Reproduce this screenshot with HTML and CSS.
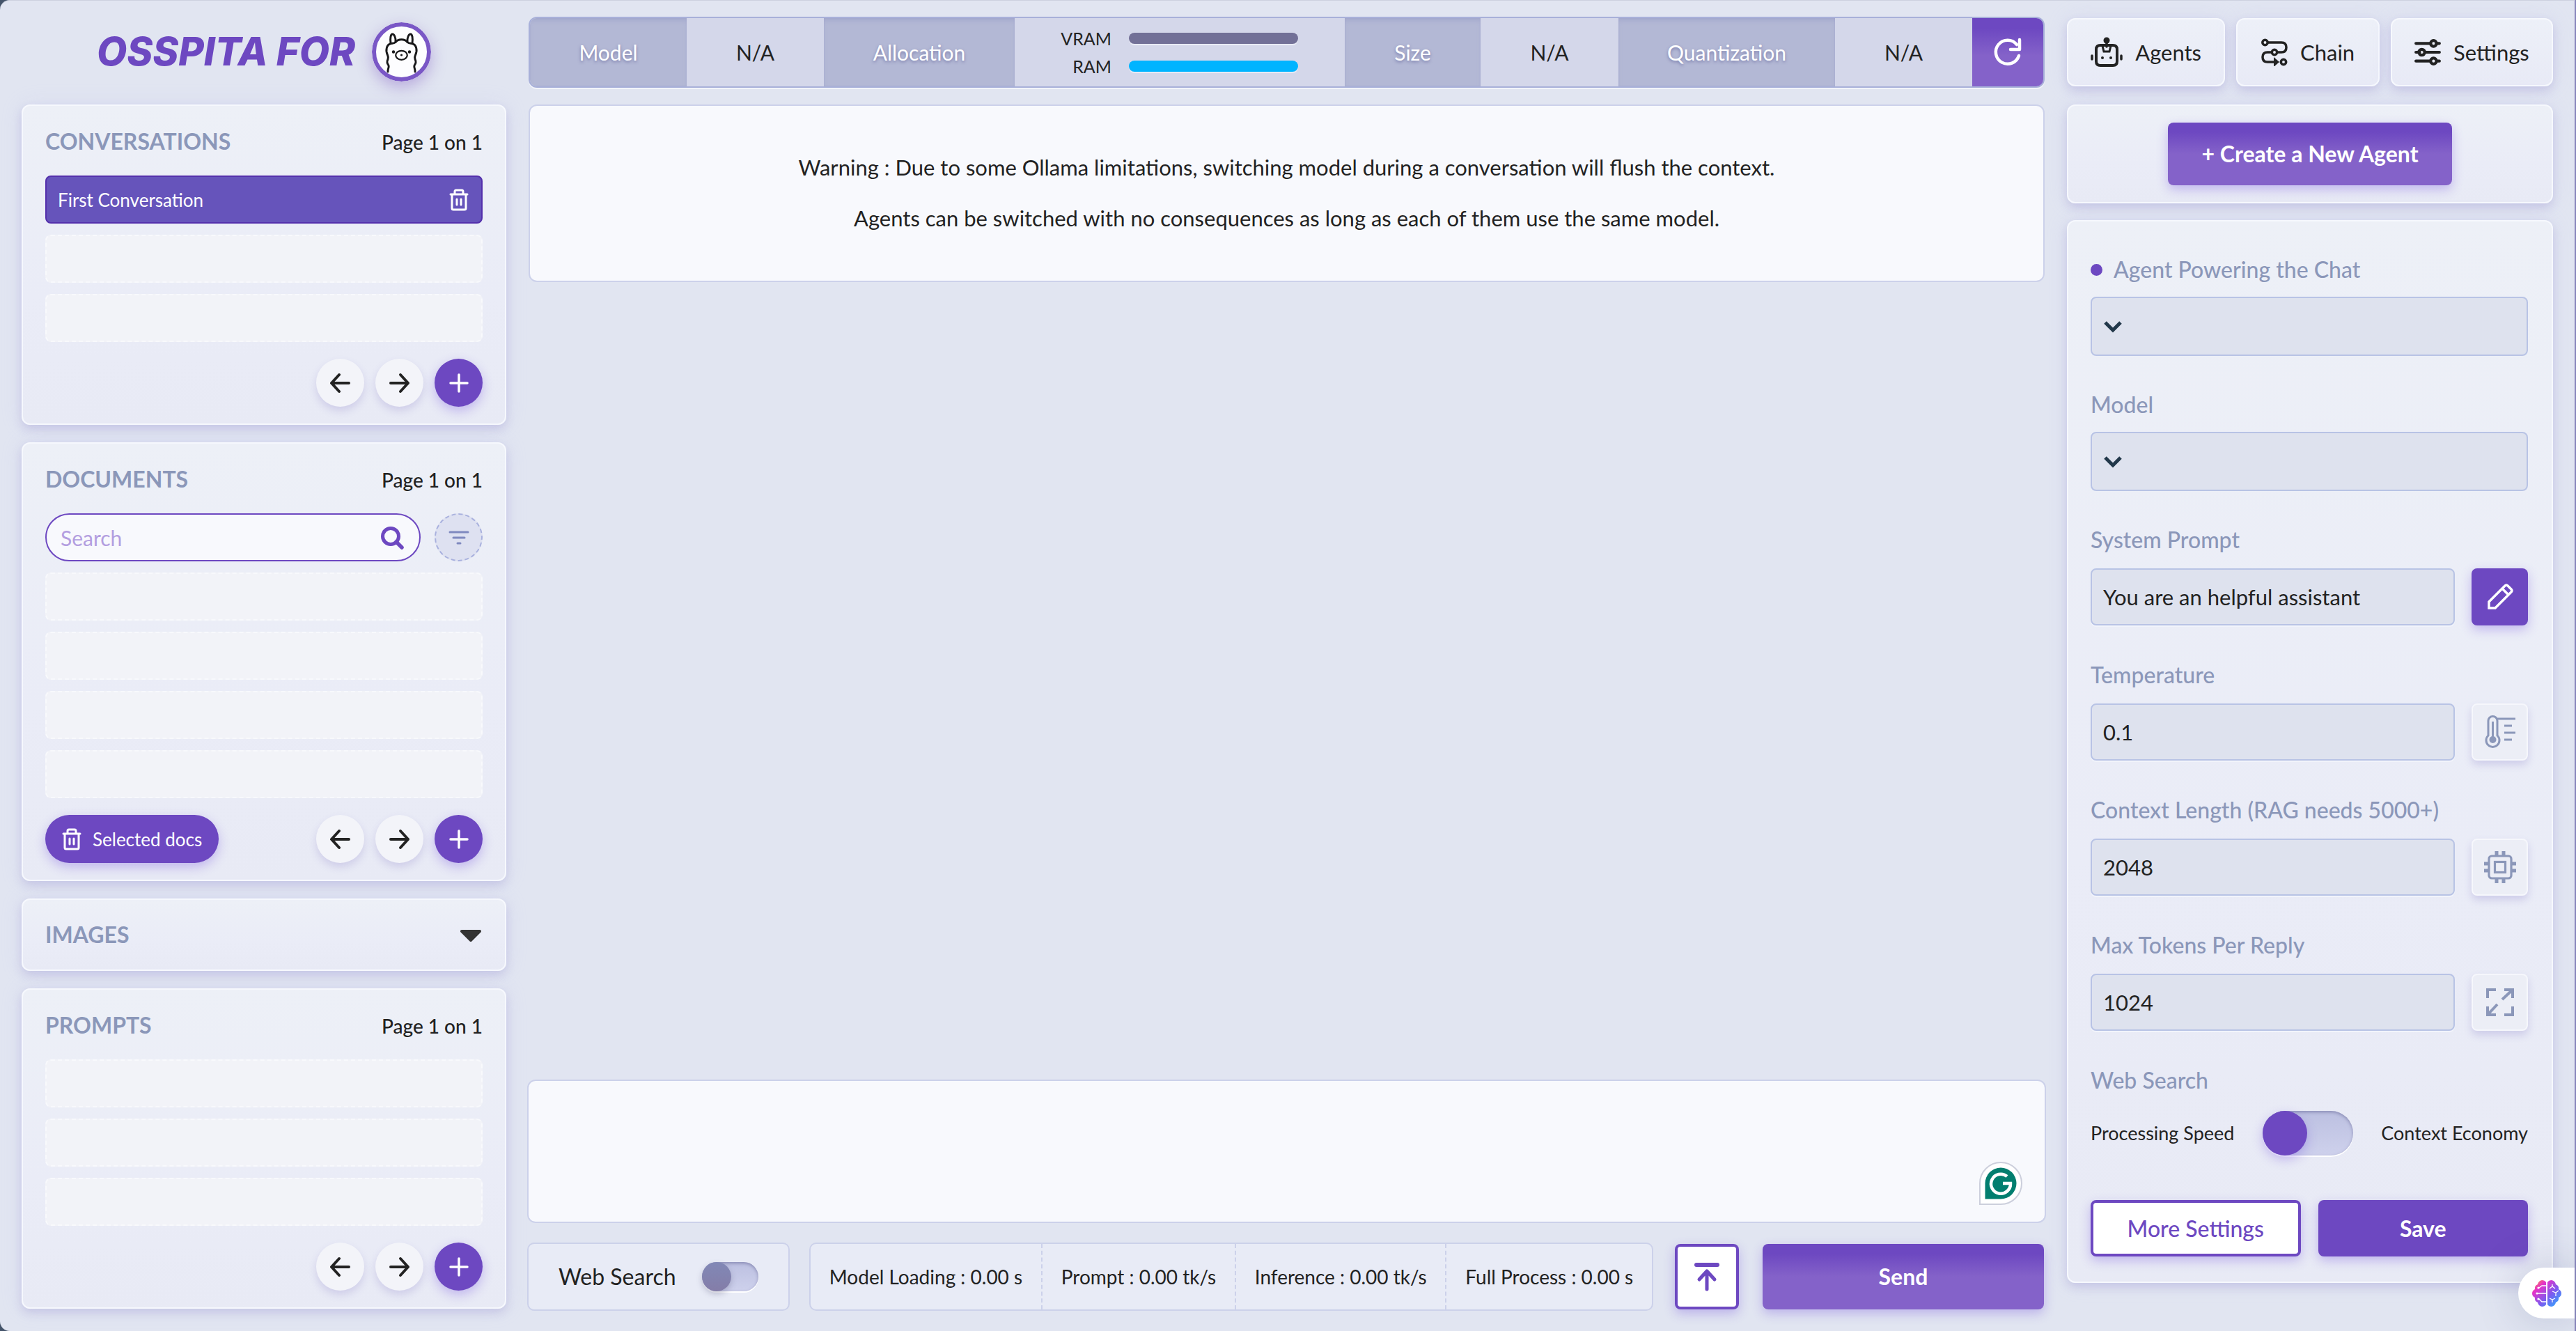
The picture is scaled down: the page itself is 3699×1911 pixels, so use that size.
FILE: index.html
```html
<!DOCTYPE html>
<html lang="en">
<head>
<meta charset="utf-8">
<title>OSSPITA FOR Ollama</title>
<link rel="stylesheet" href="styles.css">
</head>
<body>
<svg class="sprite" aria-hidden="true">
  <symbol id="i-left" viewBox="0 0 30 30"><path d="M27 15H3M13 3 2 15l11 12" fill="none" stroke="currentColor" stroke-width="4" stroke-linecap="round" stroke-linejoin="round"/></symbol>
  <symbol id="i-right" viewBox="0 0 30 30"><path d="M2 15h25M16 3l11 12-11 12" fill="none" stroke="currentColor" stroke-width="4" stroke-linecap="round" stroke-linejoin="round"/></symbol>
  <symbol id="i-plus" viewBox="0 0 30 30"><path d="M15 3v24M3 15h24" fill="none" stroke="currentColor" stroke-width="3.500" stroke-linecap="round"/></symbol>
  <symbol id="i-trash" viewBox="0 0 28 32"><path d="M2 8h24M8 7V4q0-2 2-2h8q2 0 2 2v3M4 9v19q0 2 2 2h16q2 0 2-2V9M11 15v8M17 15v8" fill="none" stroke="currentColor" stroke-width="3" stroke-linecap="round"/></symbol>
</svg>
<div class="page">
  <aside class="left">
    <header class="brand">
      <h1>OSSPITA FOR</h1>
      <svg class="logo" viewBox="0 0 85 85" role="img" aria-label="Ollama">
        <circle cx="42.500" cy="42.500" r="39.500" fill="#fdfdff" stroke="#7a57c6" stroke-width="6"/>
        <g fill="none" stroke="#18181a" stroke-width="2.900" stroke-linecap="round" stroke-linejoin="round">
          <g id="llama-side">
            <path d="M23 71c-.5-4 2-6 1-9-2-3-3-5-1-9 1-3 .5-4-.5-6-3-6-2-15 5-16.500 2-.5 5 0 6.500-2"/>
            <path d="M27 30c-1-7 0-13 2.500-13s5 5 4.500 11"/>
          </g>
          <use href="#llama-side" transform="matrix(-1 0 0 1 85 0)"/>
          <path d="M34 28.500c4-5 13-5 17 0"/>
          <ellipse cx="42.500" cy="47.300" rx="8.300" ry="6.500" stroke-width="2.200"/>
        </g>
        <g fill="#18181a"><circle cx="42.500" cy="47" r="1.600"/><circle cx="31" cy="42.500" r="2.200"/><circle cx="54" cy="42.500" r="2.200"/></g>
      </svg>
    </header>

    <section class="panel list-panel">
      <div class="panel-head"><h2>CONVERSATIONS</h2><span>Page 1 on 1</span></div>
      <ul class="rows">
        <li class="row active">First Conversation
          <button class="bare" aria-label="Delete conversation"><svg class="ic-trash"><use href="#i-trash"/></svg></button></li>
        <li class="row"></li>
        <li class="row"></li>
      </ul>
      <div class="pager">
        <button class="round" aria-label="Previous page"><svg class="ic"><use href="#i-left"/></svg></button>
        <button class="round" aria-label="Next page"><svg class="ic"><use href="#i-right"/></svg></button>
        <button class="round solid" aria-label="New conversation"><svg class="ic"><use href="#i-plus"/></svg></button>
      </div>
    </section>

    <section class="panel list-panel">
      <div class="panel-head"><h2>DOCUMENTS</h2><span>Page 1 on 1</span></div>
      <div class="search-row">
        <div class="search">
          <input type="text" placeholder="Search" aria-label="Search documents">
          <svg class="ic-search" viewBox="0 0 34 34"><circle cx="15" cy="15" r="11.500" fill="none" stroke="currentColor" stroke-width="5"/><path d="m23 23 8 8" stroke="currentColor" stroke-width="5.500" stroke-linecap="round"/></svg>
        </div>
        <button class="round filter" aria-label="Filter"><svg class="ic" viewBox="0 0 30 30"><path d="M2 7h26M7 15h16M13 23h4" stroke="currentColor" stroke-width="3" stroke-linecap="round"/></svg></button>
      </div>
      <ul class="rows">
        <li class="row"></li><li class="row"></li><li class="row"></li><li class="row"></li>
      </ul>
      <div class="pager">
        <button class="pill"><svg class="ic-trash"><use href="#i-trash"/></svg>Selected docs</button>
        <button class="round" aria-label="Previous page"><svg class="ic"><use href="#i-left"/></svg></button>
        <button class="round" aria-label="Next page"><svg class="ic"><use href="#i-right"/></svg></button>
        <button class="round solid" aria-label="Add document"><svg class="ic"><use href="#i-plus"/></svg></button>
      </div>
    </section>

    <section class="panel images">
      <h2>IMAGES</h2>
      <button class="bare" aria-label="Expand images"><svg class="ic" viewBox="0 0 30 30"><path d="M2 10h26L15 23z" fill="#333" stroke="#333" stroke-width="4" stroke-linejoin="round"/></svg></button>
    </section>

    <section class="panel list-panel">
      <div class="panel-head"><h2>PROMPTS</h2><span>Page 1 on 1</span></div>
      <ul class="rows">
        <li class="row"></li><li class="row"></li><li class="row"></li>
      </ul>
      <div class="pager">
        <button class="round" aria-label="Previous page"><svg class="ic"><use href="#i-left"/></svg></button>
        <button class="round" aria-label="Next page"><svg class="ic"><use href="#i-right"/></svg></button>
        <button class="round solid" aria-label="New prompt"><svg class="ic"><use href="#i-plus"/></svg></button>
      </div>
    </section>
  </aside>

  <main class="center">
    <div class="model-bar">
      <div class="cell key">Model</div><div class="cell">N/A</div>
      <div class="cell key">Allocation</div>
      <div class="cell memory">
        <div class="mem">VRAM <i class="meter"></i></div>
        <div class="mem">RAM <i class="meter full"></i></div>
      </div>
      <div class="cell key">Size</div><div class="cell">N/A</div>
      <div class="cell key">Quantization</div><div class="cell">N/A</div>
      <button class="refresh" aria-label="Refresh"><svg viewBox="0 0 42 42"><path d="M37 26A17 17 0 1 1 34 10" fill="none" stroke="#fff" stroke-width="4.500" stroke-linecap="round"/><path d="M38 3v14H25" fill="none" stroke="#fff" stroke-width="4.500" stroke-linecap="round" stroke-linejoin="round"/></svg></button>
    </div>

    <div class="chat">
      <div class="notice">
        <p>Warning : Due to some Ollama limitations, switching model during a conversation will flush the context.</p>
        <p>Agents can be switched with no consequences as long as each of them use the same model.</p>
      </div>
    </div>

    <div class="composer">
      <textarea aria-label="Message"></textarea>
      <svg class="grammar" viewBox="0 0 62 62" aria-hidden="true"><path d="M1 61V31A30 30 0 1 1 31 61z" fill="#fff" stroke="#cccfdc" stroke-width="2"/><path d="M8.500 53.500V31A22.500 22.500 0 1 1 31 53.500z" fill="#027e6f"/><path d="M40 21A14 14 0 1 0 45 31H34" fill="none" stroke="#fff" stroke-width="4.500"/></svg>
    </div>

    <div class="footer">
      <label class="box web">Web Search <input type="checkbox" class="toggle small"></label>
      <div class="box stats">
        <span>Model Loading : 0.00 s</span><span>Prompt : 0.00 tk/s</span><span>Inference : 0.00 tk/s</span><span>Full Process : 0.00 s</span>
      </div>
      <button class="btn outline top" aria-label="Scroll to top"><svg viewBox="0 0 36 42"><path d="M3 4h30" stroke="currentColor" stroke-width="6" stroke-linecap="round"/><path d="M18 39V14M7 25l11-12 11 12" fill="none" stroke="currentColor" stroke-width="5" stroke-linecap="round" stroke-linejoin="round"/></svg></button>
      <button class="btn gradient send">Send</button>
    </div>
  </main>

  <aside class="right">
    <nav class="tabs">
      <button class="tab agents"><svg viewBox="0 0 46 44"><path d="M8 18q0-6 6-6h18q6 0 6 6v17q0 6-6 6H14q-6 0-6-6z" fill="none" stroke="currentColor" stroke-width="4"/><circle cx="23" cy="5" r="4.500" fill="currentColor"/><path d="M23 6v8M2 27v5M44 27v5" stroke="currentColor" stroke-width="3.500" stroke-linecap="round"/><path d="M17 13l2 8h8l2-8" fill="none" stroke="currentColor" stroke-width="3"/><circle cx="17" cy="30" r="2" fill="currentColor"/><circle cx="29" cy="30" r="2" fill="currentColor"/></svg>Agents</button>
      <button class="tab chain"><svg viewBox="0 0 38 40"><g fill="none" stroke="currentColor" stroke-width="3.500"><circle cx="5.500" cy="6" r="3.700"/><circle cx="19" cy="20" r="3.700"/><circle cx="32" cy="34" r="3.700"/><path d="M9 6h20q7 0 7 7t-7 7h-6M15 20H9q-7 0-7 7t7 7h10"/></g><path d="M18 27l8 7-8 7z" fill="currentColor"/></svg>Chain</button>
      <button class="tab settings"><svg viewBox="0 0 36 38"><g fill="none" stroke="currentColor" stroke-width="4"><path d="M2 7h20M30 7h4M2 19h5M15 19h19M2 31h20M30 31h4" stroke-linecap="round"/><circle cx="26" cy="7" r="4"/><circle cx="10" cy="19" r="4"/><circle cx="26" cy="31" r="4"/></g></svg>Settings</button>
    </nav>

    <section class="panel create"><button class="btn gradient">+ Create a New Agent</button></section>

    <form class="panel form">
      <div class="field">
        <label class="lead" for="agent">Agent Powering the Chat</label>
        <div class="select"><select id="agent"><option></option></select><svg viewBox="0 0 28 18"><path d="m3 3 11 11L25 3" fill="none" stroke="#22384a" stroke-width="5"/></svg></div>
      </div>
      <div class="field">
        <label for="model">Model</label>
        <div class="select"><select id="model"><option></option></select><svg viewBox="0 0 28 18"><path d="m3 3 11 11L25 3" fill="none" stroke="#22384a" stroke-width="5"/></svg></div>
      </div>
      <div class="field">
        <label for="prompt">System Prompt</label>
        <div class="line"><input type="text" id="prompt" value="You are an helpful assistant"><button type="button" class="square solid" aria-label="Edit prompt"><svg viewBox="0 0 48 48"><path d="M8 31 31 8q2-2 4 0l5 5q2 2 0 4L17 40H8zM27 12l9 9" fill="none" stroke="currentColor" stroke-width="3.500"/></svg></button></div>
      </div>
      <div class="field">
        <label for="temp">Temperature</label>
        <div class="line"><input type="text" id="temp" value="0.1"><button type="button" class="square" aria-label="Temperature"><svg viewBox="0 0 48 48"><g fill="none" stroke="currentColor" stroke-width="3"><path d="M7 29V8a6.500 6.500 0 0 1 13 0v21a9.500 9.500 0 1 1-13 0zM18 5h28M30 15h11M30 25h16M30 35h11"/><path d="M13.500 9v24" stroke-width="3"/></g><circle cx="13.500" cy="35" r="5" fill="currentColor"/></svg></button></div>
      </div>
      <div class="field">
        <label for="ctx">Context Length (RAG needs 5000+)</label>
        <div class="line"><input type="text" id="ctx" value="2048"><button type="button" class="square" aria-label="Context length"><svg viewBox="0 0 48 48"><g fill="none" stroke="currentColor" stroke-width="3.200"><rect x="8" y="8" width="32" height="32" rx="4"/><rect x="16.500" y="16.500" width="15" height="15"/><path d="M19 7V1M29 7V1M19 41v6M29 41v6M7 19H1M7 29H1M41 19h6M41 29h6" stroke-width="5"/></g></svg></button></div>
      </div>
      <div class="field">
        <label for="tokens">Max Tokens Per Reply</label>
        <div class="line"><input type="text" id="tokens" value="1024"><button type="button" class="square" aria-label="Maximum tokens"><svg viewBox="0 0 48 48"><path d="M6 18V6h12M42 30v12H30M30 6h12v12M42 6 27 20M18 42H6V30M6 42l14-15" fill="none" stroke="currentColor" stroke-width="4"/></svg></button></div>
      </div>
      <fieldset class="mode">
        <legend>Web Search</legend>
        <div class="switch"><label for="mode">Processing Speed</label><input type="checkbox" class="toggle" id="mode"><label for="mode">Context Economy</label></div>
      </fieldset>
      <div class="actions"><button type="button" class="btn outline">More Settings</button><button type="button" class="btn solid">Save</button></div>
    </form>
  </aside>

  <button class="brain" aria-label="Assistant"><svg viewBox="0 0 42 38"><defs><linearGradient id="g" x1="0" y1="0" x2="1" y2="1"><stop offset="0" stop-color="#ffa51f"/><stop offset=".25" stop-color="#e732c8"/><stop offset=".6" stop-color="#7a5cf0"/><stop offset="1" stop-color="#22b8ff"/></linearGradient></defs><path d="M20 3v32q-2 3-6 3-5-1-6-6-5-2-4-7-4-2-4-6t4-6q-1-5 4-7 1-5 6-6 4 0 6 3zM22 3v32q2 3 6 3 5-1 6-6 5-2 4-7 4-2 4-6t-4-6q1-5-4-7-1-5-6-6-4 0-6 3z" fill="url(#g)"/><path d="M20 8h-6l-4 3M20 19H7M20 31h-6l-4-4M25 12l4-3V6M29 9l4 3M29 16l5 2 4-3M34 18v5M25 26l4 2 4-2M29 28v4" fill="none" stroke="#fff" stroke-width="1.300"/><circle cx="9" cy="11" r="1.600" fill="#fff"/><circle cx="7" cy="19" r="1.600" fill="#fff"/><circle cx="9" cy="27" r="1.600" fill="#fff"/></svg></button>
</div>
</body>
</html>
```
FILE: styles.css
```css
:root {
  --violet: #6d48c1;
  --violet-light: #8462c9;
  --muted: #8b97b9;
  --ink: #222;
  --line: #ccd1ea;
  --soft-shadow: 0 6px 14px rgba(96, 80, 180, .18), 0 0 30px rgba(190, 190, 240, .2);
  --violet-shadow: 0 6px 16px rgba(109, 72, 220, .32);
}

* { box-sizing: border-box; }

html { background: #44546a; }

body {
  margin: 0;
  font: 400 30px/40px Lato, "Open Sans", sans-serif;
  color: var(--ink);
}

button, input, select, textarea { font: inherit; color: inherit; margin: 0; }
button { border: 0; padding: 0; cursor: pointer; }
h1, h2, p, ul, fieldset { margin: 0; padding: 0; border: 0; }
svg { display: block; }
.sprite { position: absolute; width: 0; height: 0; }

.page {
  position: relative;
  display: grid;
  grid-template-columns: 696px 1fr 698px;
  gap: 30px;
  min-height: 100vh;
  padding: 23px 31px 29px;
  border-top: 1px solid #cdd1df;
  border-right: 2px solid #8886bb;
  border-radius: 14px 0 0 14px;
  background: #e1e5f1;
}

/* Panels */
.panel {
  border: 2px solid #f6f8fd;
  border-radius: 12px;
  background: linear-gradient(#edf0f7, #eaecf7 60%, #e8eaf5);
  box-shadow: var(--soft-shadow);
}

/* Left column */
.left { display: flex; flex-direction: column; gap: 25px; }
.brand {
  display: flex;
  align-items: center;
  justify-content: center;
  gap: 24px;
  height: 101px;
  padding-bottom: 1px;
}
.brand h1 { font: italic 800 56px/60px Inter, "Open Sans", sans-serif; color: var(--violet); white-space: nowrap; }
.logo { flex: none; width: 85px; height: 85px; border-radius: 50%; box-shadow: 0 8px 22px rgba(120, 80, 190, .4); }

.list-panel { padding: 0 32px 24px; }
.panel-head {
  display: flex;
  align-items: baseline;
  justify-content: space-between;
  height: 100px;
  padding-top: 31px;
}
.panel-head span { font-size: 28px; font-weight: 500; }
h2 { font-size: 32px; font-weight: 700; line-height: 40px; color: var(--muted); }

.rows { display: flex; flex-direction: column; gap: 16px; list-style: none; }
.row {
  display: flex;
  align-items: center;
  justify-content: space-between;
  height: 69px;
  padding: 0 18px 0 16px;
  border: 2px dashed #f8f9fc;
  border-radius: 8px;
  background: #f2f3f8;
  font-size: 26px;
}
.row.active { border: 2px solid #5430ac; background: #6654bb; color: #fff; }
.bare { background: none; }
.ic { width: 30px; height: 30px; }
.ic-trash { width: 28px; height: 32px; }

.pager { display: flex; justify-content: flex-end; gap: 16px; margin-top: 24px; }
.round {
  display: grid;
  place-items: center;
  flex: none;
  width: 69px;
  height: 69px;
  border-radius: 50%;
  background: #f3f4f9;
  box-shadow: 0 6px 12px rgba(96, 80, 180, .18);
}
.solid, .round.solid { background: var(--violet); color: #fff; box-shadow: var(--violet-shadow); }
.round.filter { border: 2px dashed #a9b1de; background: #dee1f1; color: #7f89bf; box-shadow: none; }
.pill {
  display: flex;
  align-items: center;
  gap: 16px;
  margin-right: auto;
  padding: 0 24px;
  border-radius: 35px;
  background: var(--violet);
  color: #fff;
  font-size: 26px;
  box-shadow: var(--violet-shadow);
}

.search-row { display: flex; gap: 20px; margin-bottom: 16px; }
.search {
  display: flex;
  align-items: center;
  flex: 1;
  height: 69px;
  padding: 0 22px 0 20px;
  border: 2px solid var(--violet);
  border-radius: 35px;
  background: #f8f9fd;
}
.search input { flex: 1; min-width: 0; padding: 0; border: 0; outline: 0; background: none; }
.search input::placeholder { color: #b39ee0; opacity: 1; }
.ic-search { width: 34px; height: 34px; color: var(--violet); }

.images { display: flex; align-items: center; justify-content: space-between; height: 104px; padding: 0 34px 0 32px; }

/* Center column */
.center { display: flex; flex-direction: column; }
.model-bar {
  display: grid;
  grid-template-columns: 225fr 197fr 274fr 474fr 195fr 198fr 311fr 197fr 102fr;
  height: 102px;
  margin: 0 2px;
  border: 2px solid #a8b0d9;
  border-radius: 12px;
  background: #d4d7ea;
  box-shadow: 0 2px 0 #f2f4fa;
  overflow: hidden;
}
.cell { display: flex; align-items: center; justify-content: center; }
.cell.key {
  background: #b3b8d5;
  color: #fff;
  text-shadow: 0 2px 4px rgba(80, 80, 140, .6);
  box-shadow: inset 0 6px 8px -4px #9fa4cb, inset 0 0 2px #9fa4cb;
}
.cell.memory { flex-direction: column; align-items: flex-end; padding-right: 67px; font-size: 25px; }
.mem { display: flex; align-items: center; gap: 25px; }
.meter { width: 243px; height: 16px; border-radius: 8px; background: #727097; box-shadow: 0 2px 0 #e8eaf5; }
.meter.full { background: #00b4ff; }
.refresh { display: grid; place-items: center; background: linear-gradient(var(--violet) 15%, var(--violet-light) 55%); }
.refresh svg { width: 42px; height: 42px; }

.chat { flex: 1; padding: 24px 2px; }
.notice {
  padding: 52px 32px 53px;
  border: 2px solid var(--line);
  border-radius: 12px;
  background: #f8f9fd;
  text-align: center;
  font-size: 31px;
  line-height: 73px;
}

.composer { position: relative; }
.composer textarea {
  display: block;
  width: 100%;
  height: 206px;
  padding: 24px;
  border: 2px solid var(--line);
  border-radius: 12px;
  outline: 0;
  resize: none;
  background: #f8f9fd;
}
.grammar { position: absolute; right: 34px; bottom: 26px; width: 62px; height: 62px; }

.footer {
  display: grid;
  grid-template-columns: 377fr 1212fr 98px 410fr;
  gap: 28px;
  height: 98px;
  margin-top: 28px;
}
.box { display: flex; align-items: center; border: 2px solid var(--line); border-radius: 10px; background: #e8ebf6; }
.web { justify-content: space-between; padding: 0 43px; font-size: 32px; }
.stats { align-items: stretch; font-size: 28px; }
.stats span { display: grid; place-items: center; flex: auto; border-left: 2px dashed var(--line); }
.stats span:first-child { border-left: 0; }

.btn {
  border-radius: 8px;
  background: var(--violet);
  color: #fff;
  font-size: 32px;
  font-weight: 700;
  box-shadow: var(--violet-shadow);
}
.btn.gradient { background: linear-gradient(var(--violet) 15%, var(--violet-light) 50%); }
.btn.outline { border: 4px solid var(--violet); background: #fff; color: var(--violet); }
.top { display: grid; place-items: center; margin: 2px 3px; }
.top svg { width: 36px; height: 42px; }
.send { margin: 2px 3px; }

/* Toggles */
.toggle {
  appearance: none;
  width: 130px;
  height: 64px;
  border-radius: 32px;
  background: linear-gradient(#bcc0e1, #ced1ec);
  box-shadow: inset 0 2px 4px rgba(90, 90, 140, .5), 0 2px 0 #fff;
}
.toggle::before {
  content: "";
  display: block;
  width: 64px;
  height: 64px;
  border-radius: 50%;
  background: var(--violet);
  box-shadow: var(--violet-shadow);
}
.toggle.small { width: 81px; height: 42px; }
.toggle.small::before { width: 42px; height: 42px; background: linear-gradient(#8188b6, #847da8); box-shadow: 0 4px 8px rgba(80, 80, 120, .3); }

/* Right column */
.right { display: flex; flex-direction: column; gap: 24px; }
.tabs { display: flex; gap: 16px; height: 102px; padding: 2px 0; }
.tab {
  display: flex;
  align-items: center;
  justify-content: center;
  gap: 18px;
  border: 2px solid #f6f8fd;
  border-radius: 12px;
  background: linear-gradient(#edf0f8, #e8eaf6);
  box-shadow: var(--soft-shadow);
  font-size: 31px;
}
.tab.agents { flex: 227; }
.tab.chain { flex: 205; }
.tab.settings { flex: 233; }
.tab svg { width: 38px; height: 40px; }
.tab.agents svg { width: 46px; height: 44px; }

.create { display: flex; justify-content: center; padding: 24px; }
.create .btn { height: 90px; padding: 0 48px; }

.form { padding: 49px 34px 36px 32px; }
.field { height: 194px; }
.field > label, legend {
  display: flex;
  align-items: center;
  height: 40px;
  margin-bottom: 19px;
  padding: 0;
  color: var(--muted);
  font-size: 32px;
  font-weight: 500;
}
.lead::before { content: ""; width: 17px; height: 17px; margin-right: 16px; border-radius: 50%; background: var(--violet); }
.select { position: relative; }
.select select, .line input {
  width: 100%;
  border: 2px solid #b8c3e5;
  border-radius: 8px;
  outline: 0;
  background: #dee2ee;
}
.select select { appearance: none; height: 85px; }
.select svg { position: absolute; left: 18px; top: 34px; width: 28px; height: 18px; pointer-events: none; }
.line { display: flex; gap: 24px; padding-top: 2px; }
.line input { flex: 1; min-width: 0; height: 82px; padding: 0 16px; box-shadow: 0 2px 0 #f2f4fb; font-size: 31px; }
.square {
  display: grid;
  place-items: center;
  width: 81px;
  height: 82px;
  border-radius: 8px;
}
.square:not(.solid) { border: 2px solid #f6f7fc; background: #eceef6; color: var(--muted); box-shadow: 0 6px 12px rgba(96, 80, 180, .2); }
.square svg { width: 48px; height: 48px; }
.mode { margin-bottom: 64px; }
.mode legend { margin-bottom: 24px; }
.switch { display: flex; align-items: center; justify-content: space-between; font-size: 27px; }
.actions { display: grid; grid-template-columns: 1fr 1fr; gap: 25px; }
.actions .btn { height: 81px; }
.actions .outline { font-weight: 500; }

.brain {
  position: absolute;
  right: 0;
  bottom: 18px;
  width: 81px;
  height: 73px;
  padding-left: 20px;
  border-radius: 37px 0 0 37px;
  background: #fff;
  box-shadow: 0 0 60px rgba(80, 90, 140, .25);
}
.brain svg { width: 42px; height: 38px; }
```
